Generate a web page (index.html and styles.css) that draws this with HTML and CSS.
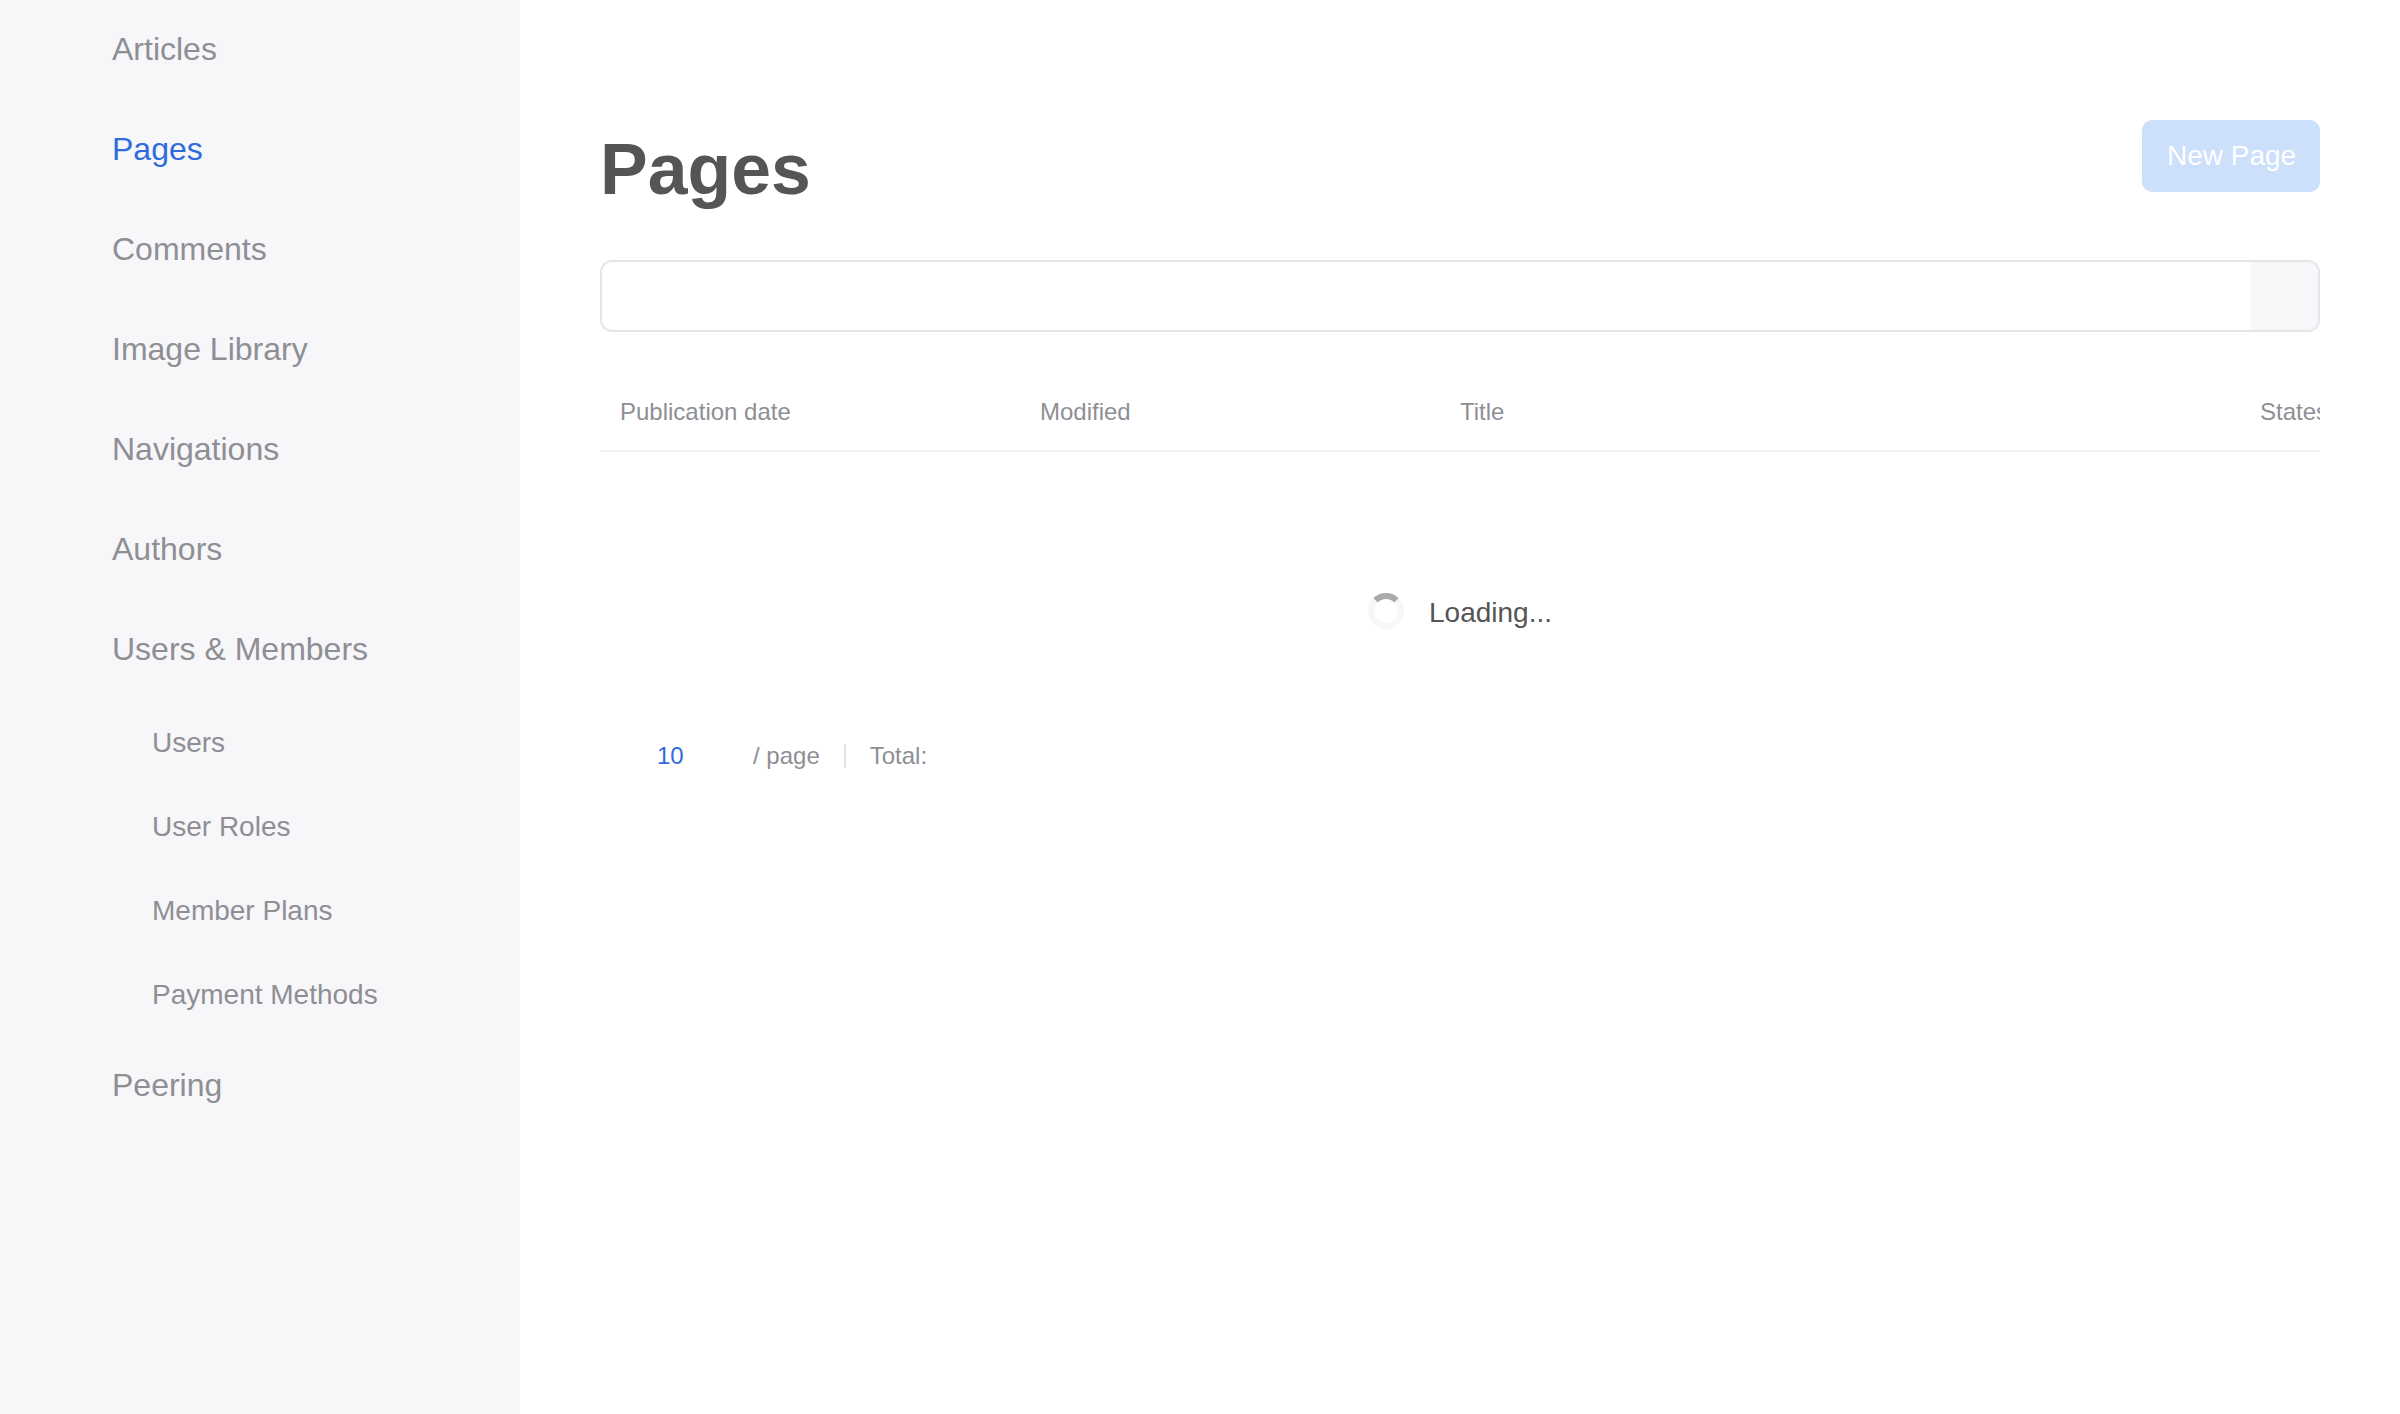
FILE: index.html
```html
<!DOCTYPE html>
<html lang="en">
<head>
  <meta charset="UTF-8">
  <title>Pages</title>
  <link rel="stylesheet" href="styles.css">
</head>
<body>
  <div class="layout">
    <nav class="sidebar">
      <a class="nav-item" href="#">Articles</a>
      <a class="nav-item active" href="#">Pages</a>
      <a class="nav-item" href="#">Comments</a>
      <a class="nav-item" href="#">Image Library</a>
      <a class="nav-item" href="#">Navigations</a>
      <a class="nav-item" href="#">Authors</a>
      <a class="nav-item" href="#">Users &amp; Members</a>
      <div class="subnav">
        <a class="subnav-item" href="#">Users</a>
        <a class="subnav-item" href="#">User Roles</a>
        <a class="subnav-item" href="#">Member Plans</a>
        <a class="subnav-item" href="#">Payment Methods</a>
      </div>
      <a class="nav-item" href="#">Peering</a>
    </nav>

    <main class="content">
      <header class="page-header">
        <h1>Pages</h1>
        <button class="new-btn" type="button">New Page</button>
      </header>

      <div class="search">
        <input class="search-input" type="text">
        <div class="search-btn"></div>
      </div>

      <div class="table-head">
        <div class="col">Publication date</div>
        <div class="col">Modified</div>
        <div class="col col-title">Title</div>
        <div class="col">States</div>
      </div>

      <div class="loading">
        <span class="spinner"></span>
        <span class="loading-text">Loading...</span>
      </div>

      <div class="pager">
        <span class="page-size">10</span>
        <span class="per-page">/ page</span>
        <span class="pager-sep"></span>
        <span>Total:</span>
      </div>
    </main>
  </div>
</body>
</html>
```

FILE: styles.css
```css
* {
  box-sizing: border-box;
}
html, body {
  margin: 0;
  height: 100%;
  overflow: hidden;
}
body {
  font-family: "Liberation Sans", Arial, sans-serif;
  background-color: #fff;
}
a {
  text-decoration: none;
}
.layout {
  display: flex;
  height: 1414px;
}
.sidebar {
  display: flex;
  flex-direction: column;
  flex: 0 0 520px;
  padding: 0 0 0 112px;
  margin-top: -1px;
  background-color: #f7f7fa;
}
.nav-item {
  display: flex;
  align-items: center;
  height: 100px;
  font-size: 32px;
  color: #8e8f94;
}
.nav-item.active {
  color: #2f6bdc;
}
.subnav {
  display: flex;
  flex-direction: column;
  padding-left: 40px;
  margin-top: 2px;
  margin-bottom: -2px;
}
.subnav-item {
  display: flex;
  align-items: center;
  height: 84px;
  font-size: 28px;
  color: #8e8f94;
}
.content {
  flex: 1;
  padding: 120px 80px 0;
  min-width: 0;
}
.page-header {
  display: flex;
  justify-content: space-between;
  align-items: flex-start;
  height: 140px;
}
h1 {
  margin: 0;
  padding-top: 1px;
  font-size: 71.5px;
  line-height: 96px;
  font-weight: bold;
  color: #555;
}
.new-btn {
  width: 178px;
  height: 72px;
  padding: 0 0 0 1px;
  background-color: #cce0fc;
  color: #fff;
  border: none;
  border-radius: 10px;
  font-family: inherit;
  font-size: 28px;
}
.search {
  display: flex;
  height: 72px;
  border: 2px solid #e4e5e9;
  border-radius: 12px;
  overflow: hidden;
}
.search-input {
  flex: 1;
  border: none;
  outline: none;
  background: transparent;
}
.search-btn {
  flex: 0 0 68px;
  background-color: #f6f7f9;
}
.table-head {
  display: flex;
  height: 120px;
  padding: 50px 0 0 20px;
  margin-bottom: 28px;
  border-bottom: 2px solid #f0f0f2;
  font-size: 24px;
  line-height: 60px;
  color: #8e8f94;
  overflow: hidden;
  white-space: nowrap;
}
.col {
  flex: 0 0 420px;
}
.col-title {
  flex-basis: 800px;
}
.loading {
  display: flex;
  align-items: center;
  justify-content: center;
  gap: 25px;
  height: 262px;
}
.spinner {
  width: 36px;
  height: 36px;
  border: 6px solid #f6f7f9;
  border-top-color: #aaa;
  border-radius: 50%;
}
.loading-text {
  padding-top: 3px;
  font-size: 28px;
  color: #555;
}
.pager {
  display: flex;
  align-items: center;
  height: 28px;
  padding-left: 57px;
  font-size: 24px;
  color: #8e8f94;
}
.page-size {
  width: 96px;
  color: #2f6bdc;
}
.pager-sep {
  width: 2px;
  height: 24px;
  margin: 0 24px;
  background-color: #e4e5e9;
}
```
